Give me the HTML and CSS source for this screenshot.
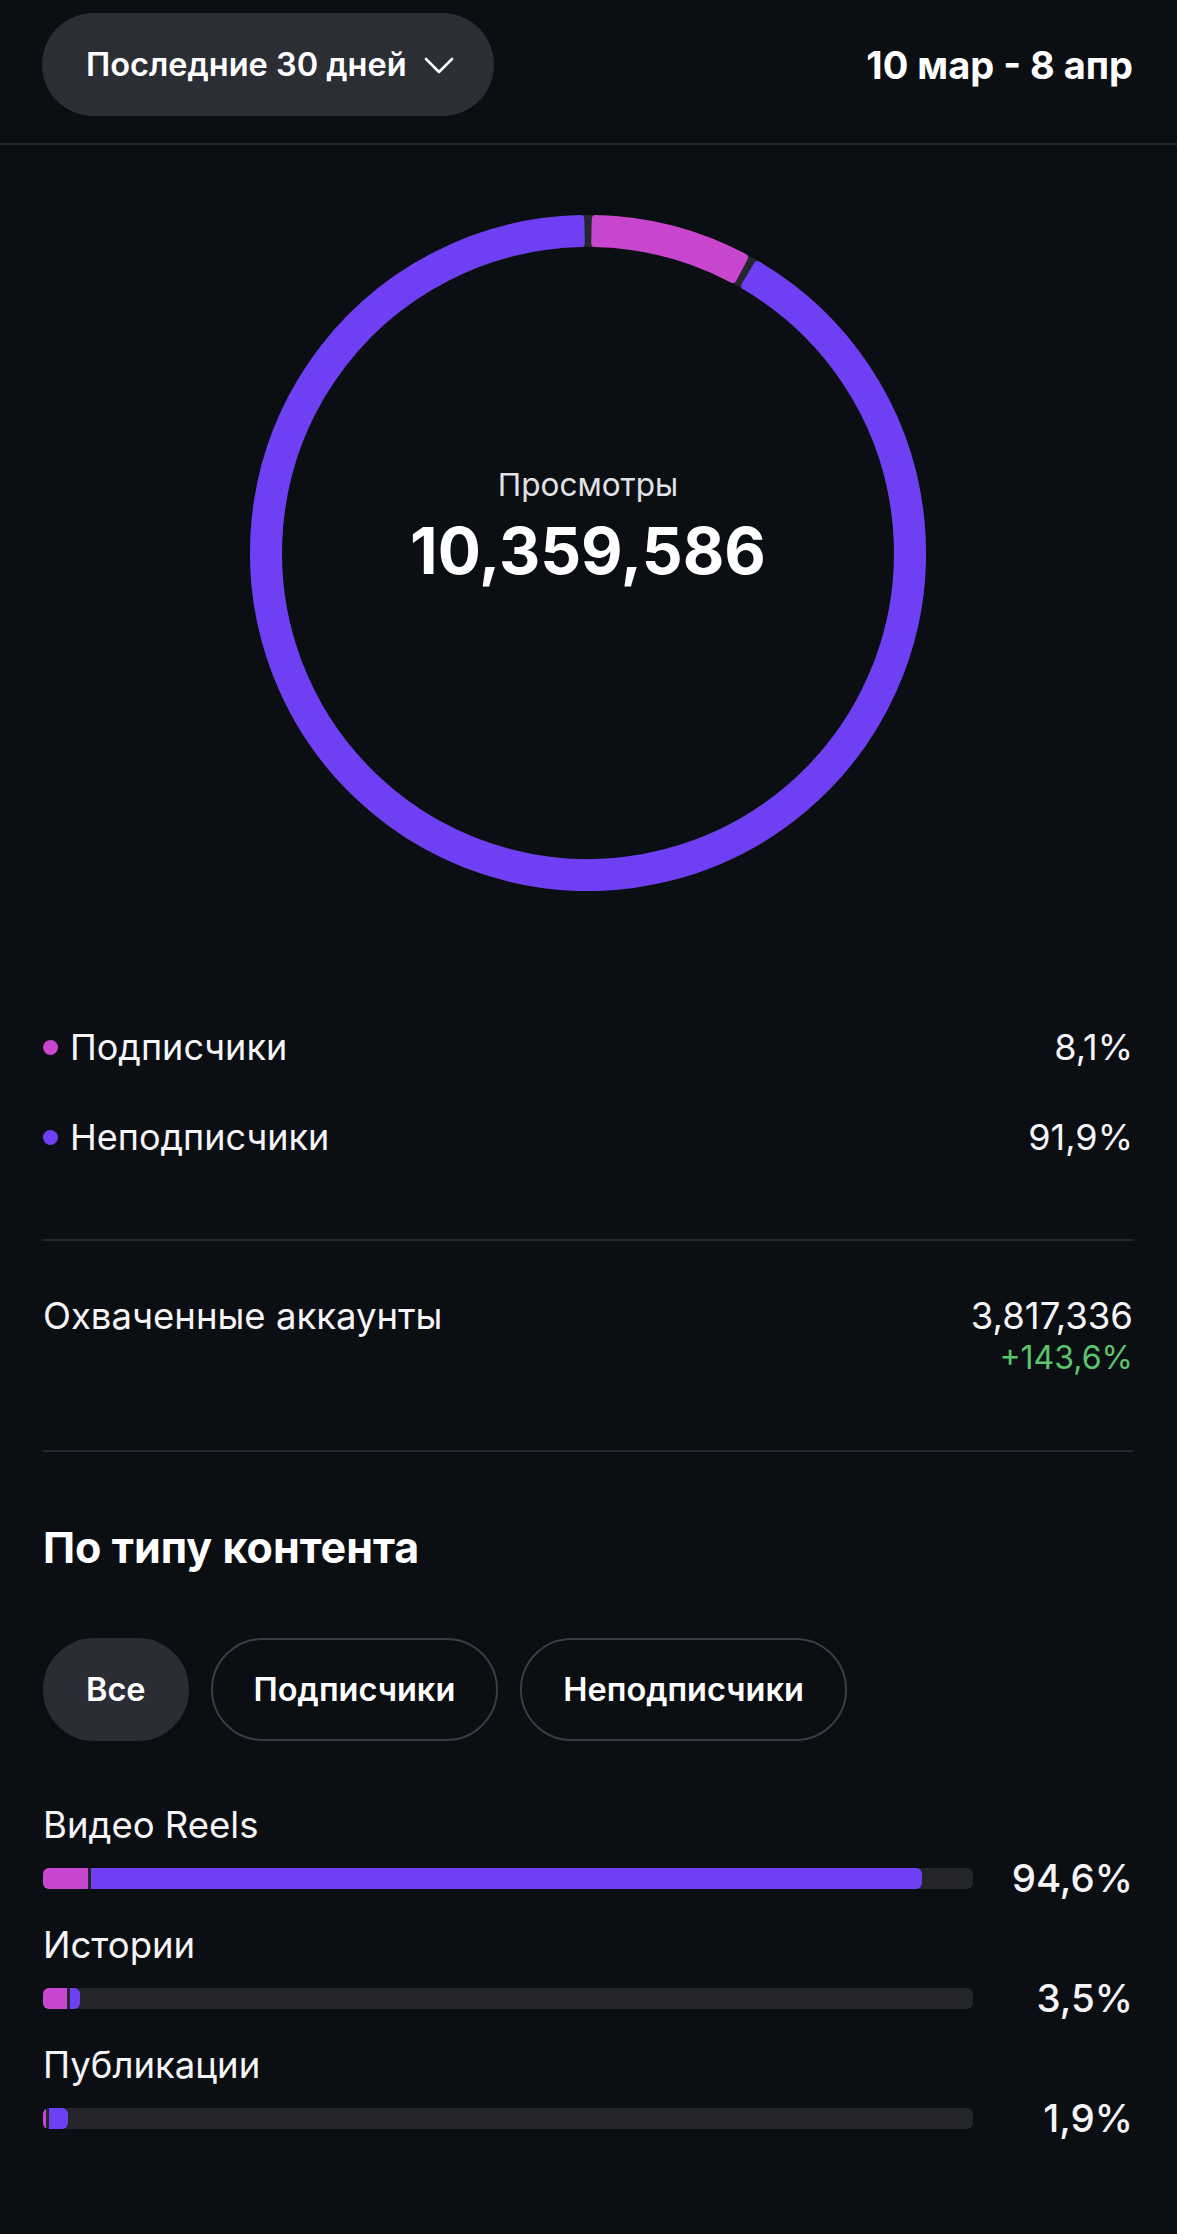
FILE: index.html
```html
<!DOCTYPE html>
<html lang="ru">
<head>
    <meta charset="UTF-8">
    <meta name="viewport" content="width=device-width, initial-scale=1.0">
    <title>Просмотры</title>
    <link rel="stylesheet" href="styles.css">
</head>
<body>
    <header class="top-bar">
        <button class="period-select">
            <span>Последние 30 дней</span>
            <svg class="chevron" width="30" height="17" viewBox="0 0 30 17">
                <polyline points="2,2 15,15 28,2" fill="none" stroke="#ffffff" stroke-width="2.6" stroke-linecap="round" stroke-linejoin="round"/>
            </svg>
        </button>
        <div class="date-range">10 мар - 8 апр</div>
    </header>

    <main class="content">
        <section class="donut">
            <svg class="donut-chart" width="676" height="676" viewBox="0 0 676 676">
                <circle cx="338" cy="338" r="322" fill="none" stroke="#26272c" stroke-width="32"/>
                <!-- подписчики 8,1% -->
                <path d="M345.75 4.09 A334 334 0 0 1 493.93 42.63 L482.72 63.85 A310 310 0 0 0 345.20 28.08 Z"
                      fill="#c946ce" stroke="#c946ce" stroke-width="8" stroke-linejoin="round"/>
                <!-- неподписчики 91,9% -->
                <path d="M507.47 50.19 A334 334 0 1 1 330.25 4.09 L330.80 28.08 A310 310 0 1 0 495.29 70.87 Z"
                      fill="#6f3ff3" stroke="#6f3ff3" stroke-width="8" stroke-linejoin="round"/>
            </svg>
            <div class="donut-center">
                <div class="donut-label">Просмотры</div>
                <div class="donut-value">10,359,586</div>
            </div>
        </section>

        <section class="legend">
            <div class="legend-row">
                <div class="legend-name"><span class="dot dot-pink"></span>Подписчики</div>
                <div class="legend-value">8,1%</div>
            </div>
            <div class="legend-row">
                <div class="legend-name"><span class="dot dot-purple"></span>Неподписчики</div>
                <div class="legend-value">91,9%</div>
            </div>
        </section>

        <div class="divider divider-first"></div>

        <section class="reach">
            <div class="reach-title">Охваченные аккаунты</div>
            <div class="reach-numbers">
                <div class="reach-value">3,817,336</div>
                <div class="reach-change">+143,6%</div>
            </div>
        </section>

        <div class="divider divider-second"></div>

        <h2 class="section-title">По типу контента</h2>

        <div class="chips">
            <button class="chip chip-active">Все</button>
            <button class="chip">Подписчики</button>
            <button class="chip">Неподписчики</button>
        </div>

        <section class="types">
            <div class="type-row">
                <div class="type-name">Видео Reels</div>
                <div class="type-line">
                    <div class="track">
                        <div class="fill">
                            <span class="seg seg-pink" style="width: 45px"></span>
                            <span class="seg seg-purple" style="width: 831px"></span>
                        </div>
                    </div>
                    <div class="type-percent">94,6%</div>
                </div>
            </div>
            <div class="type-row">
                <div class="type-name">Истории</div>
                <div class="type-line">
                    <div class="track">
                        <div class="fill">
                            <span class="seg seg-pink" style="width: 24px"></span>
                            <span class="seg seg-purple" style="width: 10px"></span>
                        </div>
                    </div>
                    <div class="type-percent">3,5%</div>
                </div>
            </div>
            <div class="type-row">
                <div class="type-name">Публикации</div>
                <div class="type-line">
                    <div class="track">
                        <div class="fill">
                            <span class="seg seg-pink" style="width: 3px"></span>
                            <span class="seg seg-purple" style="width: 19px"></span>
                        </div>
                    </div>
                    <div class="type-percent">1,9%</div>
                </div>
            </div>
        </section>
    </main>
</body>
</html>
```

FILE: styles.css
```css
html, body {
    background-color: #0b0e13;
}
body {
    margin: 0;
    min-height: 2234px;
    font-family: 'Inter', 'Liberation Sans', sans-serif;
    color: #f5f5f7;
}
.top-bar {
    display: flex;
    justify-content: space-between;
    align-items: center;
    padding: 13px 44px 27px 42px;
    border-bottom: 2px solid #23262c;
}
.period-select {
    display: inline-flex;
    align-items: center;
    gap: 17px;
    height: 103px;
    padding: 0 40px 0 44px;
    border: none;
    border-radius: 52px;
    background-color: #2b2e35;
    color: #ffffff;
    font-family: inherit;
    font-size: 32.5px;
    font-weight: 600;
}
.period-select .chevron {
    margin-top: 2px;
}
.date-range {
    font-size: 38px;
    font-weight: 700;
    color: #ffffff;
}
.content {
    padding: 0 44px 0 43px;
}
.donut {
    display: grid;
    justify-items: center;
    margin-top: 70px;
}
.donut-chart,
.donut-center {
    grid-area: 1 / 1;
}
.donut-center {
    align-self: start;
    padding-top: 252px;
    text-align: center;
}
.donut-label {
    font-size: 31.5px;
    line-height: 36px;
    color: #e2e2e6;
}
.donut-value {
    margin-top: 12px;
    font-size: 64px;
    line-height: 72px;
    font-weight: 700;
    color: #ffffff;
}
.legend {
    margin-top: 111px;
}
.legend-row {
    display: flex;
    justify-content: space-between;
    align-items: center;
    height: 90px;
    font-size: 36px;
    line-height: 44px;
}
.legend-name {
    display: flex;
    align-items: center;
}
.dot {
    width: 15px;
    height: 15px;
    border-radius: 50%;
    margin: 0 12px 0 0;
}
.dot-pink {
    background-color: #c946ce;
}
.dot-purple {
    background-color: #6f3ff3;
}
.divider {
    height: 2px;
    background-color: #25282e;
}
.divider-first {
    margin-top: 57px;
}
.divider-second {
    margin-top: 74px;
}
.reach {
    display: flex;
    justify-content: space-between;
    align-items: flex-start;
    margin-top: 53px;
}
.reach-title,
.reach-value {
    font-size: 36.5px;
    line-height: 44px;
}
.reach-numbers {
    text-align: right;
}
.reach-change {
    margin-top: 2px;
    font-size: 32px;
    line-height: 36px;
    color: #5cc46c;
}
.section-title {
    margin: 70px 0 0;
    font-size: 43px;
    line-height: 50px;
    font-weight: 700;
    color: #ffffff;
}
.chips {
    display: flex;
    gap: 22px;
    margin-top: 66px;
}
.chip {
    height: 103px;
    padding: 0 41px;
    border: 2px solid #3a3d44;
    border-radius: 52px;
    background-color: transparent;
    color: #ffffff;
    font-family: inherit;
    font-size: 32.5px;
    font-weight: 600;
}
.chip-active {
    background-color: #2a2d35;
    border-color: #2a2d35;
}
.types {
    margin-top: 62px;
}
.type-row + .type-row {
    margin-top: 34px;
}
.type-name {
    font-size: 36.5px;
    line-height: 44px;
}
.type-line {
    display: grid;
    grid-template-columns: 1fr 160px;
    align-items: center;
    height: 21px;
    margin-top: 21px;
}
.track {
    height: 21px;
    border-radius: 6px;
    background-color: #24262b;
}
.fill {
    display: inline-flex;
    gap: 3px;
    height: 21px;
    border-radius: 6px;
    overflow: hidden;
}
.seg {
    display: block;
    height: 100%;
}
.seg-pink {
    background-color: #c946ce;
}
.seg-purple {
    background-color: #6f3ff3;
}
.type-percent {
    text-align: right;
    font-size: 38.5px;
    line-height: 21px;
    font-weight: 500;
}
```
